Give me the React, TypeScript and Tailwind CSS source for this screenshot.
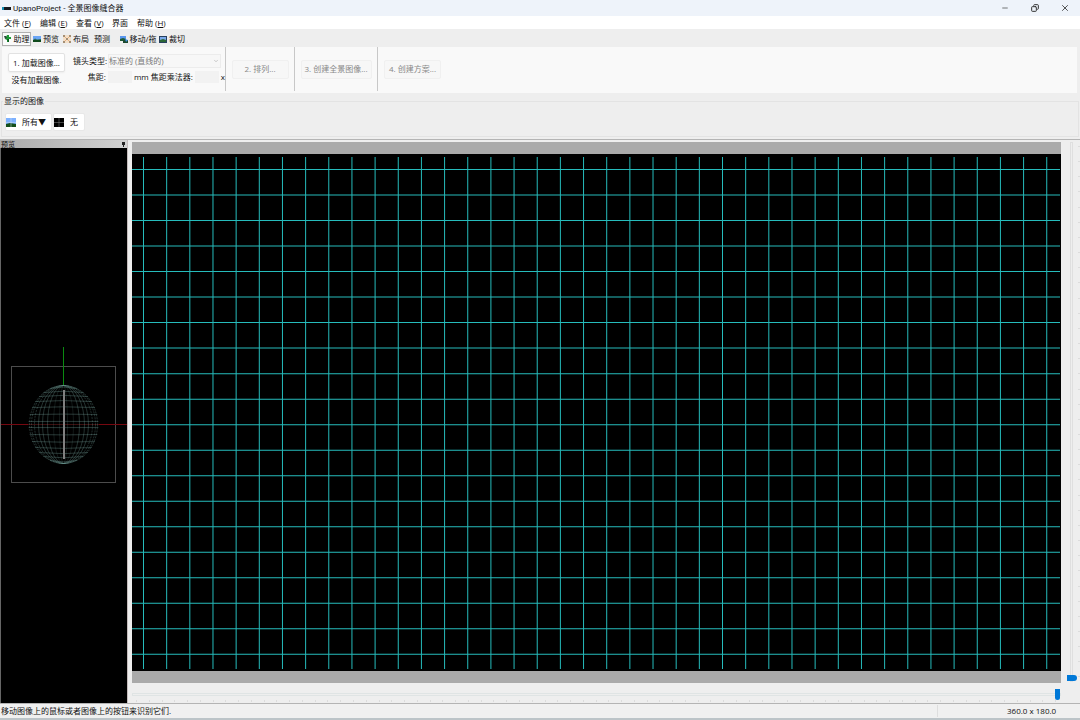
import { ChevronDown, Copy, Minus, X } from "lucide-react";

const menus = [
  { label: "文件", hotkey: "F", className: "w-9" },
  { label: "编辑", hotkey: "E", className: "w-9" },
  { label: "查看", hotkey: "V", className: "w-9" },
  { label: "界面", hotkey: "", className: "w-[25px]" },
  { label: "帮助", hotkey: "H", className: "w-9" },
];

const verticalLines = Array.from({ length: 40 }, (_, i) => 11.5 + i * 23.16);
const horizontalLines = Array.from({ length: 20 }, (_, i) => 15.5 + i * 25.57);

const PictureIcon = () => (
  <svg className="h-2 w-2 shrink-0" viewBox="0 0 8 8">
    <rect width="8" height="4" y="1" fill="#6aa5f5" />
    <path d="M0 5 L2 3.5 L4 4.5 L8 4 V7 H0Z" fill="#2b6a5c" />
    <path d="M0 5 H8 V7 H0Z" fill="#0f4a1c" />
  </svg>
);

const AssistantIcon = () => (
  <svg className="h-2 w-2 shrink-0" viewBox="0 0 8 8">
    <path d="M3 0 H5 V2 H7 V4 H5 V7 H3 V5 L1 4Z" fill="#1d9a35" />
    <path d="M0 1 H2 L3 3 L1 4Z" fill="#2b4b3b" />
    <path d="M3 4 H5 V7 H4Z" fill="#0b5a20" />
  </svg>
);

const LayoutIcon = () => (
  <svg className="h-2 w-2 shrink-0" viewBox="0 0 8 8">
    <rect width="8" height="8" fill="#f3dfc8" />
    <path d="M1 1 L7 7 M7 1 L1 7" stroke="#efb27c" strokeWidth="1" />
    <path d="M0 0h2v2h-2z M6 0h2v2h-2z M0 6h2v2h-2z M6 6h2v2h-2z M3 3h2v2h-2z" fill="#a58f74" />
  </svg>
);

const MoveIcon = () => (
  <svg className="h-2 w-2 shrink-0" viewBox="0 0 8 8">
    <rect width="6" height="5" y="1" fill="#5b97ee" />
    <path d="M0 4 L3 3 L6 4 V6 H0Z" fill="#1f5a34" />
    <path d="M3 5 H8 V8 H3Z" fill="#1d4a30" />
    <path d="M5 4 L8 5 L6 7Z" fill="#3f8de0" />
  </svg>
);

const CropIcon = () => (
  <svg className="h-2 w-2 shrink-0" viewBox="0 0 8 8">
    <rect width="8" height="7" y="1" fill="#27405e" />
    <rect width="6" height="3" x="1" y="2" fill="#7ba9ea" />
    <path d="M1 5 L4 4 L7 5 V7 H1Z" fill="#2a6634" />
  </svg>
);

const AllIcon = () => (
  <svg className="h-2.5 w-2.5 shrink-0" viewBox="0 0 10 10">
    <rect width="10" height="9" y="1" fill="#7db1ff" />
    <path d="M0 7 L4 6 L10 7 V10 H0Z" fill="#14501c" />
    <path d="M5 1 V10 M0 5.5 H10" stroke="#d0e2f5" strokeWidth="0.5" />
  </svg>
);

const NoneIcon = () => (
  <svg className="h-2.5 w-2.5 shrink-0" viewBox="0 0 10 10">
    <rect width="10" height="9" y="1" fill="#000" />
    <path d="M5 1 V10 M0 5.5 H10" stroke="#8a8a8a" strokeWidth="0.5" />
  </svg>
);

const tabs = [
  { label: "助理", icon: AssistantIcon, className: "w-[29px] border-[#b0b0b0] bg-[#fafafa]" },
  { label: "预览", icon: PictureIcon, className: "ml-px w-7 border-transparent" },
  { label: "布局", icon: LayoutIcon, className: "ml-0.5 w-7 border-transparent" },
  { label: "预测", icon: null, className: "ml-0.5 w-5 border-transparent" },
  { label: "移动/拖", icon: MoveIcon, className: "ml-1.5 w-10 border-transparent" },
  { label: "裁切", icon: CropIcon, className: "w-7 border-transparent" },
];

const steps = [
  { label: "2. 排列...", className: "w-[57px]", wrapper: "w-[69px] border-[#c8c8c8]" },
  { label: "3. 创建全景图像...", className: "w-[71px]", wrapper: "w-[83px] border-[#c8c8c8]" },
  { label: "4. 创建方案...", className: "w-[57px]", wrapper: "w-[70px] border-transparent" },
];

const TitleBar = () => (
  <header className="flex h-4 items-center bg-[#eef3fa] pl-0.5">
    <svg className="mr-0.5 h-2 w-[9px]" viewBox="0 0 9 8">
      <path d="M0 3 H3 V6 H0Z" fill="#168fb5" />
      <path d="M2 3 H9 V6 H2Z" fill="#151a20" />
    </svg>
    <h1 className="pt-0.5 font-['Roboto','Noto_Sans_CJK_SC',sans-serif]">UpanoProject - 全景图像缝合器</h1>
    <div className="ml-auto flex items-center text-[#333]">
      <button aria-label="最小化" className="flex w-[30px] justify-center">
        <Minus className="h-2 w-2" />
      </button>
      <button aria-label="还原" className="flex w-[30px] justify-center">
        <Copy className="h-2 w-2 -scale-x-100" strokeWidth={3} />
      </button>
      <button aria-label="关闭" className="flex w-[30px] justify-center">
        <X className="h-2.5 w-2.5" />
      </button>
    </div>
  </header>
);

const MenuBar = () => (
  <nav className="flex h-[13px] items-center bg-white pl-1">
    {menus.map((menu) => (
      <button key={menu.label} className={`flex h-3 items-center whitespace-pre ${menu.className}`}>
        {menu.label}
        {menu.hotkey && (
          <span className="font-medium">
            {" ("}
            <u>{menu.hotkey}</u>)
          </span>
        )}
      </button>
    ))}
  </nav>
);

const TabBar = () => (
  <div className="flex h-[18px] items-center pt-0.5 pl-0.5">
    {tabs.map((tab) => {
      const Icon = tab.icon;
      return (
        <button
          key={tab.label}
          className={`flex h-3.5 items-center justify-center gap-0.5 border whitespace-nowrap ${tab.className}`}
        >
          {Icon && <Icon />}
          {tab.label}
        </button>
      );
    })}
  </div>
);

const AssistantPanel = () => (
  <section className="mr-[3px] ml-0.5 flex h-[46px] bg-[#f9f9f9]">
    <div className="flex h-11 w-[224px] border-r border-[#c8c8c8] pt-1.5">
      <div className="ml-1.5 w-[57px] text-center">
        <button className="h-[19px] w-full rounded-xs border border-[#e2e2e2] bg-white shadow-xs">1. 加载图像...</button>
        <p className="mt-0.5 whitespace-nowrap">没有加载图像.</p>
      </div>
      <div className="ml-2 flex-1">
        <div className="flex h-4 items-center">
          <label htmlFor="lens" className="w-[35px] whitespace-nowrap">
            镜头类型:
          </label>
          <div className="relative mr-1 flex-1">
            <select id="lens" disabled className="h-3.5 w-full appearance-none border border-[#ececec] bg-[#f7f7f7] leading-3 text-[#777]">
              <option>标准的 (直线的)</option>
            </select>
            <ChevronDown className="pointer-events-none absolute top-1 right-0.5 h-1.5 w-1.5 text-[#999]" />
          </div>
        </div>
        <div className="flex h-4 items-center gap-0.5 whitespace-nowrap">
          <label htmlFor="focal" className="w-[33px] text-right">
            焦距:
          </label>
          <input id="focal" disabled className="h-3 w-6 bg-[#f2f2f2]" />
          <span>mm</span>
          <label htmlFor="crop">焦距乘法器:</label>
          <input id="crop" disabled className="h-3 w-6 bg-[#f2f2f2]" />
          <span>x</span>
        </div>
      </div>
    </div>
    {steps.map((step) => (
      <div key={step.label} className={`flex h-11 items-center justify-center border-r ${step.wrapper}`}>
        <button
          disabled
          className={`h-[19px] rounded-xs border border-[#f0f0f0] bg-[#f7f7f7] whitespace-nowrap text-[#888] ${step.className}`}
        >
          {step.label}
        </button>
      </div>
    ))}
  </section>
);

const ImagesBar = () => (
  <fieldset className="mx-px mt-[3px] mb-0.5 h-[41px] border border-[#e3e3e3]">
    <legend className="ml-px px-px leading-[10px]">显示的图像</legend>
    <div className="mt-[7px] ml-[3px] flex gap-px">
      <button className="flex h-[18px] w-[47px] items-center gap-1.5 rounded-xs border border-[#e8e8e8] bg-white whitespace-nowrap">
        <AllIcon />
        <span>所有▼</span>
      </button>
      <button className="flex h-[18px] w-8 items-center gap-1.5 rounded-xs border border-[#e8e8e8] bg-white">
        <NoneIcon />无
      </button>
    </div>
  </fieldset>
);

// latitude and longitude wires of the panorama sphere
const latitudes = [-36, -32, -28, -23, -17, -10, -3, 3, 10, 17, 23, 28, 32, 36];
const longitudes = [4, 10, 16, 21, 25, 29, 32, 34];

const Sphere = () => (
  <svg className="h-[140px] w-full" viewBox="0 0 126 140" fill="none">
    <path d="M27 78.5 H98" stroke="#3c1010" />
    <rect x="10.5" y="20.5" width="104" height="116" stroke="#4c4c4c" />
    <path d="M0 78.5 H27 M98 78.5 H126" stroke="#760810" />
    <g stroke="#7fb0aa" strokeOpacity="0.45" strokeWidth="0.7">
      {longitudes.map((rx) => (
        <ellipse
          key={rx}
          cx="62.5"
          cy="78.5"
          rx={rx}
          ry="39"
          strokeDasharray={rx > 28 ? "2 1" : undefined}
          strokeOpacity={rx < 12 ? 0.2 : 0.4}
        />
      ))}
      {latitudes.map((dy) => {
        const half = 35 * Math.sqrt(1 - (dy * dy) / 1521);
        return <path key={dy} d={`M${62.5 - half} ${78.5 + dy} Q62.5 ${78.5 + dy * 1.08} ${62.5 + half} ${78.5 + dy}`} />;
      })}
    </g>
    <path d="M62.5 1 V39" stroke="#0a8a10" />
    <path d="M63 44 V113" stroke="#808080" strokeWidth="2" />
  </svg>
);

const PreviewPane = () => (
  <aside className="flex w-[127px] shrink-0 flex-col">
    <div className="flex h-2 items-center justify-between bg-linear-to-r from-[#aaa] to-[#d2d2d2] pr-0.5 pl-px leading-none">
      <h2 className="text-[7px]">预览</h2>
      <svg className="h-[5px] w-[3px]" viewBox="0 0 3 5">
        <path d="M0 0 H3 V3 H2 V5 H1 V3 H0Z" fill="#222" />
      </svg>
    </div>
    <div className="flex flex-1 items-center border-l border-[#666] bg-black pb-[19px]">
      <Sphere />
    </div>
  </aside>
);

const Canvas = () => (
  <div className="flex min-h-0 flex-1 flex-col bg-[#aaa] pt-3 pb-3">
    <div className="min-h-0 flex-1 bg-black">
      <svg className="block h-full w-full" viewBox="0 0 929 518" preserveAspectRatio="none" stroke="#26bcbc">
        {verticalLines.map((x) => (
          <path key={x} d={`M${x} 3 V516`} vectorEffect="non-scaling-stroke" />
        ))}
        {horizontalLines.map((y) => (
          <path key={y} d={`M0 ${y} H928`} vectorEffect="non-scaling-stroke" />
        ))}
      </svg>
    </div>
  </div>
);

const Workspace = () => (
  <main className="flex min-h-0 flex-1 border-t border-[#b4b4b4]">
    <PreviewPane />
    <div className="flex min-w-0 flex-1 border-l border-[#c4bcbc] pt-0.5 pl-1">
      <div className="flex min-w-0 flex-1 flex-col">
        <Canvas />
        <div className="flex h-5 flex-col justify-between pt-[5px] pb-px">
          <input
            type="range"
            aria-label="水平视场"
            defaultValue={100}
            className="h-3 w-full appearance-none bg-transparent [&::-webkit-slider-runnable-track]:h-[3px] [&::-webkit-slider-runnable-track]:border [&::-webkit-slider-runnable-track]:border-[#dfe4e4] [&::-webkit-slider-thumb]:-mt-[5px] [&::-webkit-slider-thumb]:h-[11px] [&::-webkit-slider-thumb]:w-[5px] [&::-webkit-slider-thumb]:appearance-none [&::-webkit-slider-thumb]:rounded-b-full [&::-webkit-slider-thumb]:bg-[#0078d7]"
          />
          <div className="mx-1 flex h-0.5 justify-between">
            {Array.from({ length: 73 }, (_, i) => (
              <span key={i} className="w-px bg-[#dcdcdc]" />
            ))}
          </div>
        </div>
      </div>
      <div className="mb-[21px] flex w-[19px] justify-end gap-px">
        <input
          type="range"
          aria-label="垂直视场"
          defaultValue={100}
          className="h-full w-[11px] appearance-none bg-transparent [writing-mode:vertical-lr] [&::-webkit-slider-runnable-track]:w-[3px] [&::-webkit-slider-runnable-track]:border [&::-webkit-slider-runnable-track]:border-[#dfdfdf] [&::-webkit-slider-thumb]:-ml-1 [&::-webkit-slider-thumb]:h-[6px] [&::-webkit-slider-thumb]:w-[10px] [&::-webkit-slider-thumb]:appearance-none [&::-webkit-slider-thumb]:rounded-r-full [&::-webkit-slider-thumb]:bg-[#0078d7]"
        />
        <div className="flex w-0.5 flex-col justify-between py-1">
          {Array.from({ length: 36 }, (_, i) => (
            <span key={i} className="h-px bg-[#dcdcdc]" />
          ))}
        </div>
      </div>
    </div>
  </main>
);

const StatusBar = () => (
  <footer className="flex h-[17px] items-center border-t border-b-2 border-t-[#b4b4b4] border-b-[#bcc4c8] bg-[#f0f0f0] pl-px">
    <p>移动图像上的鼠标或者图像上的按钮来识别它们.</p>
    <p className="ml-auto w-[143px] border-l border-[#dedede] pl-[69px]">360.0 x 180.0</p>
  </footer>
);

export default function App() {
  return (
    <div className="flex h-screen min-h-80 flex-col overflow-hidden bg-[#eee] font-['Open_Sans','Noto_Sans_CJK_SC',sans-serif] text-[8px] leading-3 text-[#111]">
      <TitleBar />
      <MenuBar />
      <TabBar />
      <AssistantPanel />
      <ImagesBar />
      <Workspace />
      <StatusBar />
    </div>
  );
}
